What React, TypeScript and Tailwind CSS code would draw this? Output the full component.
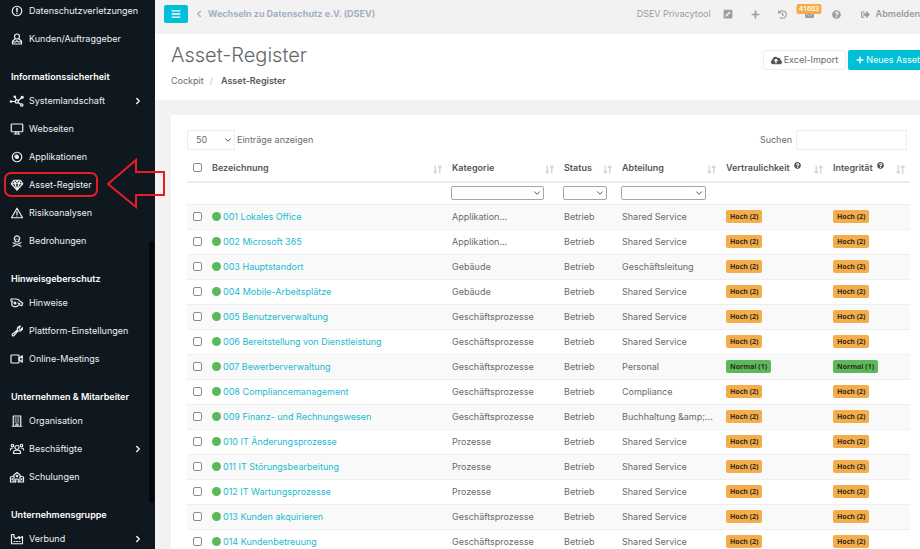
import type { ReactNode } from "react";
import clsx from "clsx";
import { ChevronDown, ChevronLeft, ChevronRight } from "lucide-react";
import {
  FaBars,
  FaCloudUploadAlt,
  FaEnvelope,
  FaHistory,
  FaPenSquare,
  FaPlus,
  FaQuestionCircle,
  FaSignOutAlt,
} from "react-icons/fa";

const icons: Record<string, ReactNode> = {
  alert: (
    <>
      <circle cx="12" cy="12" r="9.5" />
      <path d="M12 6.5v6.5" strokeWidth="3" />
      <path d="M12 16.8v.2" strokeWidth="3" />
    </>
  ),
  client: (
    <>
      <circle cx="12" cy="7" r="5" />
      <path d="M8 12 3 16.500V22h18v-5.500L16 12M3.500 18H9l3-2.500 3 2.500h5.500" />
    </>
  ),
  network: (
    <>
      <path d="M1 13h7M11 10 8 4M14 11.500 21 6M14 15l6 4" />
      <circle cx="11.500" cy="13" r="3.200" />
      <circle cx="0" cy="13" r="1.500" fill="currentColor" />
      <circle cx="7.500" cy="3.500" r="1.500" fill="currentColor" />
      <circle cx="22.500" cy="4.500" r="2" fill="currentColor" />
      <circle cx="21.500" cy="20" r="2.500" />
    </>
  ),
  desktop: (
    <>
      <rect x="0.500" y="2" width="23" height="15.500" rx="1.500" />
      <path d="M10 17.500 9 22M14 17.500l1 4.500M6.500 22h11" />
    </>
  ),
  disc: (
    <>
      <circle cx="12" cy="12" r="9.500" />
      <circle cx="12" cy="12" r="3" fill="currentColor" />
      <path d="M6.500 12A5.500 5.500 0 0 1 12 6.500" strokeWidth="1.500" />
    </>
  ),
  gem: (
    <>
      <path d="M5.500 2.500h13L23.500 9.500 12 22 .5 9.500z" />
      <path d="M1 9.500h22M8 9.500l4 12 4-12M5.500 3 8 9.500 12 3l4 6.500L18.500 3" />
    </>
  ),
  warning: (
    <>
      <path d="M12 2.500 23 21.500H1z" />
      <path d="M12 9v6M12 18v.2" strokeWidth="2.500" />
    </>
  ),
  skull: (
    <>
      <path d="M8.500 13.500V11A5.500 5 0 1 1 15.500 11v2.500z" />
      <path d="M4 15.500 20 22.500M20 15.500 4 22.500" />
      <path d="M10 8v.5M14 8v.5" />
    </>
  ),
  whistle: (
    <>
      <path d="M0 4h10c4 0 6 1.500 7.500 4l6 4.500-2 5-6-2c-2 3-5 4.500-8 4C3 19 1 16 1.500 12L3 8.500 0 8z" />
      <circle cx="8" cy="12" r="1.800" fill="currentColor" />
      <path d="m14 12 4 2" />
    </>
  ),
  wrench: (
    <path d="m13 10-10.500 8.500a2.200 2.200 0 0 0 3 3L14 11.500M13 10c-1.500-4 1-8 6-8l-3 3.500.5 3L20 9l3-3.500c.5 5-4 8-9 6" />
  ),
  video: (
    <>
      <rect x="0" y="4" width="16" height="16" rx="1.500" />
      <path d="m16 11 6.500-5.500v13L16 13" />
    </>
  ),
  building: (
    <>
      <path d="M4.500 22V2h15v20M2.500 22.500h19M10 22v-4h4v4" />
      <path d="M8.500 6h2M13.500 6h2M8.500 10h2M13.500 10h2M8.500 14h2M13.500 14h2" />
    </>
  ),
  users: (
    <>
      <circle cx="12" cy="9" r="4" />
      <path d="M5 21v-2c0-3 2-4.500 4-4.500h6c2 0 4 1.500 4 4.500v2z" />
      <circle cx="3" cy="5" r="2.500" />
      <circle cx="21" cy="5" r="2.500" />
      <path d="M-1 14v-1c0-2 1.500-3 4.500-3M25 14v-1c0-2-1.500-3-4.500-3" />
    </>
  ),
  school: (
    <>
      <path d="M6 22V8l6-5 6 5v14M-1 22V12l7-2M25 22V12l-7-2M-1 22h10M15 22h10" />
      <path d="M9.500 22v-6h5v6M2.500 15v3M21.500 15v3" />
      <circle cx="12" cy="10" r="1.500" />
    </>
  ),
  industry: (
    <>
      <path d="M1 3v18.500h22V7l-6.500 4.500V7L10 11.500 6 8V3z" />
      <path d="M6 17h2M11 17h2M16 17h2" />
    </>
  ),
};

interface NavItem {
  icon: string;
  label: string;
  submenu?: boolean;
  marked?: boolean;
}

const sections: { title?: string; items: NavItem[] }[] = [
  {
    items: [
      { icon: "alert", label: "Datenschutzverletzungen" },
      { icon: "client", label: "Kunden/Auftraggeber" },
    ],
  },
  {
    title: "Informationssicherheit",
    items: [
      { icon: "network", label: "Systemlandschaft", submenu: true },
      { icon: "desktop", label: "Webseiten" },
      { icon: "disc", label: "Applikationen" },
      { icon: "gem", label: "Asset-Register", marked: true },
      { icon: "warning", label: "Risikoanalysen" },
      { icon: "skull", label: "Bedrohungen" },
    ],
  },
  {
    title: "Hinweisgeberschutz",
    items: [
      { icon: "whistle", label: "Hinweise" },
      { icon: "wrench", label: "Plattform-Einstellungen" },
      { icon: "video", label: "Online-Meetings" },
    ],
  },
  {
    title: "Unternehmen & Mitarbeiter",
    items: [
      { icon: "building", label: "Organisation" },
      { icon: "users", label: "Beschäftigte", submenu: true },
      { icon: "school", label: "Schulungen" },
    ],
  },
  {
    title: "Unternehmensgruppe",
    items: [{ icon: "industry", label: "Verbund", submenu: true }],
  },
];

const assets = [
  ["001 Lokales Office", "Applikation...", "Shared Service"],
  ["002 Microsoft 365", "Applikation...", "Shared Service"],
  ["003 Hauptstandort", "Gebäude", "Geschäftsleitung"],
  ["004 Mobile-Arbeitsplätze", "Gebäude", "Shared Service"],
  ["005 Benutzerverwaltung", "Geschäftsprozesse", "Shared Service"],
  ["006 Bereitstellung von Dienstleistung", "Geschäftsprozesse", "Shared Service"],
  ["007 Bewerberverwaltung", "Geschäftsprozesse", "Personal"],
  ["008 Compliancemanagement", "Geschäftsprozesse", "Compliance"],
  ["009 Finanz- und Rechnungswesen", "Geschäftsprozesse", "Buchhaltung &amp;..."],
  ["010 IT Änderungsprozesse", "Prozesse", "Shared Service"],
  ["011 IT Störungsbearbeitung", "Prozesse", "Shared Service"],
  ["012 IT Wartungsprozesse", "Prozesse", "Shared Service"],
  ["013 Kunden akquirieren", "Geschäftsprozesse", "Shared Service"],
  ["014 Kundenbetreuung", "Geschäftsprozesse", "Shared Service"],
].map(([name, category, department]) => ({
  name,
  category,
  department,
  normal: name.startsWith("007"),
}));

const columns = [
  { label: "Bezeichnung" },
  { label: "Kategorie", filter: "w-[93px]" },
  { label: "Status", filter: "w-11" },
  { label: "Abteilung", filter: "w-[85px]" },
  { label: "Vertraulichkeit", help: true },
  { label: "Integrität", help: true },
];

function Sidebar() {
  return (
    <aside className="relative z-10 w-[155px] shrink-0 bg-[#0f181f] text-[#eef0f1]">
      <nav className="-mt-[3px]">
        {sections.map((section, i) => (
          <div key={i}>
            {section.title && (
              <h2 className="h-[34px] truncate pt-4 pl-[11px] leading-4 font-semibold text-white">
                {section.title}
              </h2>
            )}
            {section.items.map((item) => (
              <a key={item.label} href="#" className="relative flex h-7 items-center gap-1.5 pr-3 pl-[11px]">
                <svg
                  viewBox="0 0 24 24"
                  className="size-3 shrink-0 overflow-visible"
                  fill="none"
                  stroke="currentColor"
                  strokeWidth="2.400"
                  strokeLinecap="round"
                  strokeLinejoin="round"
                  aria-hidden="true"
                >
                  {icons[item.icon]}
                </svg>
                <span className="whitespace-nowrap">{item.label}</span>
                {item.submenu && <ChevronRight className="ml-auto size-2.5" strokeWidth={3.5} />}
                {item.marked && <Marker />}
              </a>
            ))}
          </div>
        ))}
      </nav>
      <div className="absolute top-[241px] right-px h-[262px] w-[5px] rounded-sm bg-[#04090e]" />
    </aside>
  );
}

// hand-drawn frame and arrow over the active entry
function Marker() {
  return (
    <svg
      className="pointer-events-none absolute top-0 left-0 h-7 w-[170px] overflow-visible"
      viewBox="0 0 170 28"
      fill="none"
      stroke="#e81c24"
      strokeWidth="2"
      aria-hidden="true"
    >
      <rect x="5" y="2" width="92" height="23" rx="6" />
      <path d="M108 13 136-11V1h28v23h-28v12z" />
    </svg>
  );
}

function TopBar() {
  return (
    <div className="flex h-[34px] items-center justify-between pb-1.5 pl-[9px] text-[#9a9c9e]">
      <div className="flex items-center">
        <button className="flex h-[18px] w-6 items-center justify-center rounded-xs bg-[#00c0d8] text-white" aria-label="Menü">
          <FaBars className="size-2.5" />
        </button>
        <a href="#" className="ml-1.5 flex items-center gap-1 font-bold whitespace-nowrap text-[#a3afc4]">
          <ChevronLeft className="size-2.5" strokeWidth={3.5} />
          Wechseln zu Datenschutz e.V. (DSEV)
        </a>
      </div>
      <div className="flex shrink-0 items-center">
        <span className="mr-3 whitespace-nowrap">DSEV Privacytool</span>
        <div className="mr-5 flex items-center gap-[18px]">
          <button aria-label="Bearbeiten"><FaPenSquare className="size-2.5" /></button>
          <button aria-label="Neu"><FaPlus className="size-[9px]" /></button>
          <button aria-label="Verlauf"><FaHistory className="size-[9px]" /></button>
          <button className="relative" aria-label="Nachrichten">
            <FaEnvelope className="size-[9px]" />
            <span className="absolute -top-1.5 left-1/2 h-[10px] w-[25px] -translate-x-1/2 rounded-xs bg-[#f5ad4a] text-center font-['Open_Sans',sans-serif] text-[7px] leading-[10px] font-semibold text-white">
              41603
            </span>
          </button>
          <button aria-label="Hilfe"><FaQuestionCircle className="size-[9px]" /></button>
        </div>
        <a href="#" className="flex items-center gap-1.5 font-semibold">
          <FaSignOutAlt className="size-[9px]" />
          Abmelden
        </a>
      </div>
    </div>
  );
}

function PageHeader() {
  return (
    <header className="flex h-[66px] justify-between bg-white pl-4">
      <div>
        <h1 className="mt-[7px] text-[20px] leading-7 font-light text-[#65686a]">Asset-Register</h1>
        <div className="mt-1 flex gap-1.5 leading-4">
          <a href="#">Cockpit</a>
          <span className="text-[#c8c8c8]">/</span>
          <strong className="ml-0.5 font-semibold text-[#55585a]">Asset-Register</strong>
        </div>
      </div>
      <div className="-mr-2 flex shrink-0 gap-0.5 pt-4">
        <button className="flex h-5 items-center gap-0.5 rounded-xs border border-[#eeeeee] px-[7px] whitespace-nowrap">
          <FaCloudUploadAlt className="size-[11px] text-[#555]" />
          Excel-Import
        </button>
        <button className="flex h-5 items-center gap-0.5 rounded-xs bg-[#00c0d8] px-2 whitespace-nowrap text-white">
          <FaPlus className="size-2" />
          Neues Asset
        </button>
      </div>
    </header>
  );
}

function SortIcon() {
  return (
    <svg viewBox="0 0 10 10" className="mt-1 mr-[5px] size-[9px] shrink-0" fill="none" stroke="#d5d7d8" strokeWidth="1.500" aria-hidden="true">
      <path d="M2.500 0v9M.5 7l2 2 2-2M7.500 10V1M5.500 3l2-2 2 2" />
    </svg>
  );
}

function Filter({ label, width }: { label: string; width: string }) {
  return (
    <div className={clsx("relative", width)}>
      <select aria-label={label} className="block h-3.5 w-full appearance-none rounded-xs border border-[#a5a5a5] bg-white">
        <option></option>
      </select>
      <ChevronDown className="pointer-events-none absolute top-0.5 right-0.5 size-2.5 text-[#333]" />
    </div>
  );
}

function Checkbox({ label }: { label: string }) {
  return (
    <input
      type="checkbox"
      aria-label={label}
      className="mx-auto block size-[9px] appearance-none rounded-xs border border-[#8a8a8a] bg-white checked:bg-[#00c0d8]"
    />
  );
}

function Rating({ normal }: { normal: boolean }) {
  return (
    <span
      className={clsx(
        "block h-[13px] w-fit rounded-xs px-1 font-['Open_Sans',sans-serif] text-[7px] leading-[13px] font-bold text-[#332b1c]",
        normal ? "bg-[#5cb85c]" : "bg-[#f3ad4b]",
      )}
    >
      {normal ? "Normal (1)" : "Hoch (2)"}
    </span>
  );
}

function AssetTable() {
  return (
    <table className="w-full table-fixed border-collapse text-left">
      <colgroup>
        <col className="w-5" />
        <col />
        <col className="w-28" />
        <col className="w-[58px]" />
        <col className="w-[104px]" />
        <col className="w-[107px]" />
        <col className="w-[82px]" />
      </colgroup>
      <thead>
        <tr className="h-8 border-b-2 border-[#ebebeb]">
          <th className="pt-1"><Checkbox label="Alle auswählen" /></th>
          {columns.map((col) => (
            <th key={col.label} className="pt-1 pl-[5px] font-semibold text-[#55585a]">
              <div className="flex items-center justify-between">
                <span className="flex gap-1">
                  {col.label}
                  {col.help && <FaQuestionCircle className="size-[7px]" />}
                </span>
                <SortIcon />
              </div>
            </th>
          ))}
        </tr>
        <tr className="h-[22px]">
          <td></td>
          {columns.map((col) => (
            <td key={col.label} className="pl-1">
              {col.filter && <Filter label={col.label} width={col.filter} />}
            </td>
          ))}
        </tr>
      </thead>
      <tbody>
        {assets.map((asset) => (
          <tr key={asset.name} className="h-[25px] border-t border-[#eeeeee] odd:bg-[#f9f9f9]">
            <td><Checkbox label={asset.name} /></td>
            <td className="pl-[5px]">
              <a href="#" className="flex items-center gap-0.5 whitespace-nowrap text-[#1cb9cf]">
                <span className="size-[9px] rounded-full bg-[#5cb85c]" />
                {asset.name}
              </a>
            </td>
            <td className="pl-[5px]">{asset.category}</td>
            <td className="pl-[5px]">Betrieb</td>
            <td className="pl-[5px] whitespace-nowrap">{asset.department}</td>
            <td className="pl-[5px]"><Rating normal={asset.normal} /></td>
            <td className="pl-[5px]"><Rating normal={asset.normal} /></td>
          </tr>
        ))}
      </tbody>
    </table>
  );
}

export default function App() {
  return (
    <div className="flex h-screen overflow-hidden bg-[#f2f2f2] font-['Inter',sans-serif] text-[9px] leading-3 text-[#686b6d]">
      <Sidebar />
      <main className="min-w-0 flex-1">
        <TopBar />
        <PageHeader />
        <section className="mt-[15px] ml-4 bg-white pt-[15px] pr-2.5 pl-4">
          <div className="flex items-center justify-between pr-[3px]">
            <label className="flex items-center gap-0.5">
              <span className="relative">
                <select className="block h-5 w-12 appearance-none border border-[#eeeeee] bg-white pl-2">
                  <option>50</option>
                </select>
                <ChevronDown className="pointer-events-none absolute top-[5px] right-0.5 size-2.5 text-[#333]" />
              </span>
              Einträge anzeigen
            </label>
            <label className="flex items-center gap-1">
              Suchen
              <input type="search" className="h-5 w-[111px] border border-[#eeeeee] px-2 outline-none" />
            </label>
          </div>
          <AssetTable />
        </section>
      </main>
    </div>
  );
}
